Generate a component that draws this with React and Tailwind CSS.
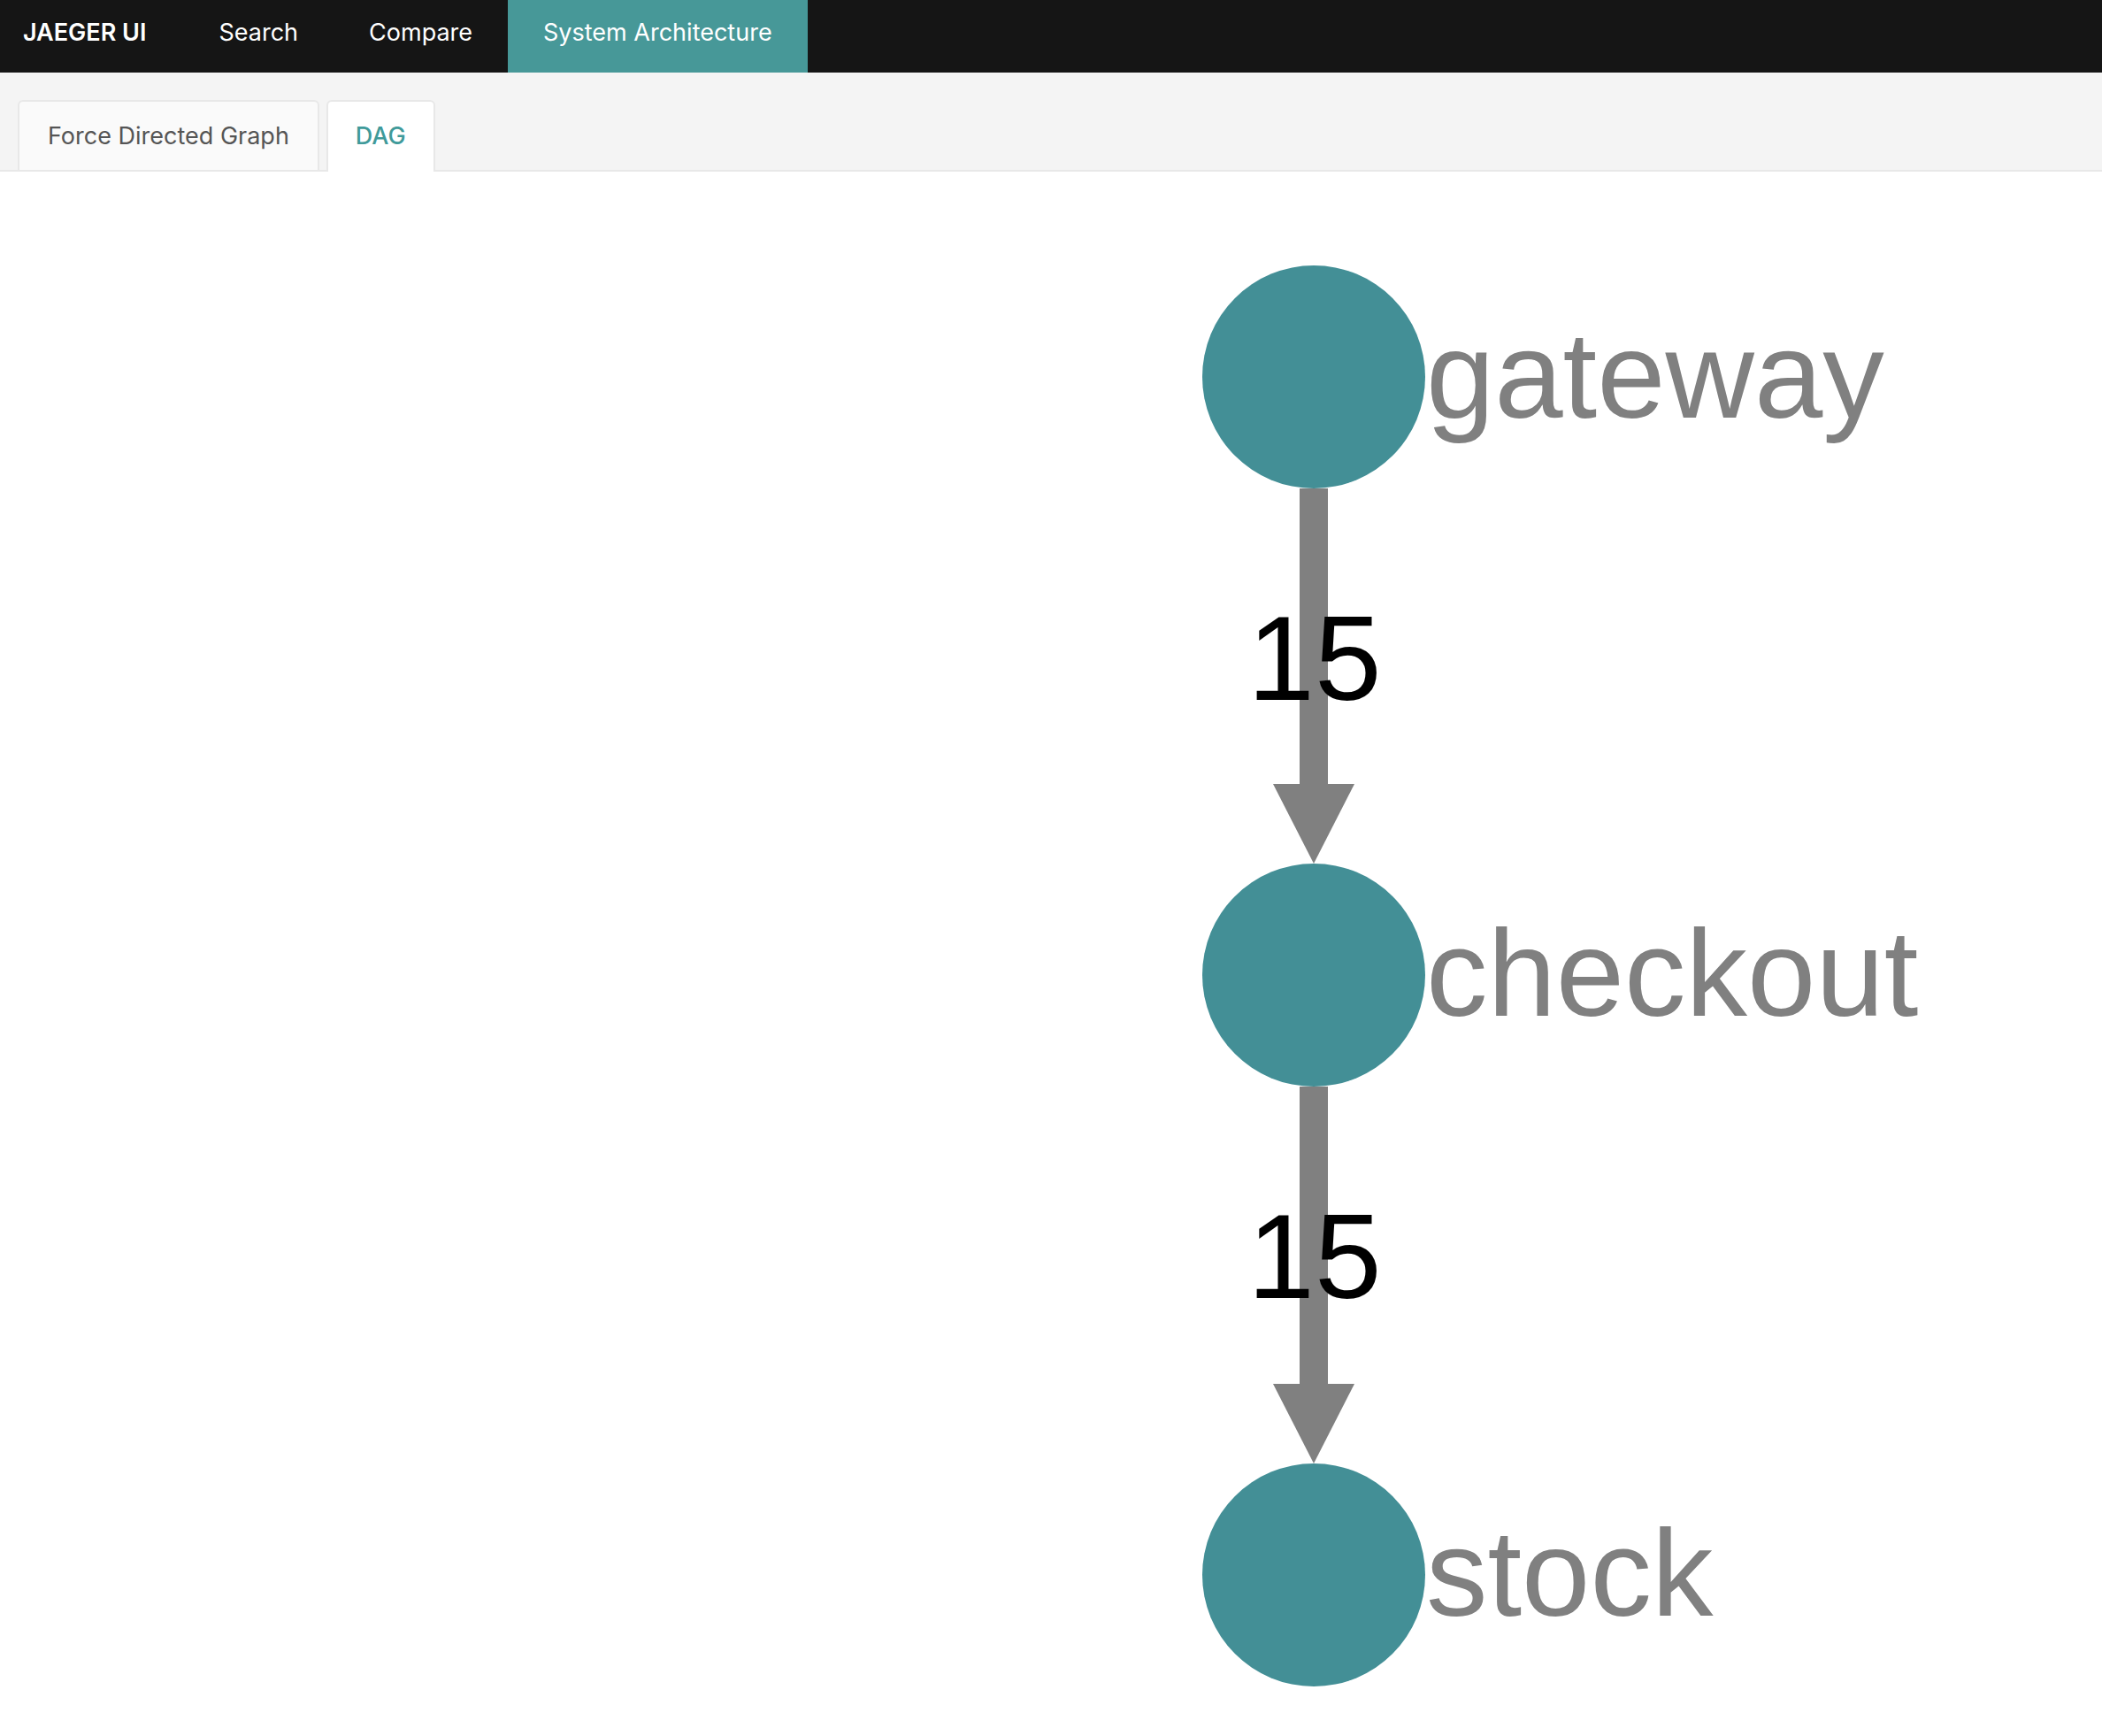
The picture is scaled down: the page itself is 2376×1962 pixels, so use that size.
import React from 'react';

const nodes = [
    { name: 'gateway', cy: 426 },
    { name: 'checkout', cy: 1102 },
    { name: 'stock', cy: 1780 },
];

const CX = 1485;
const R = 126;
const TOP = 194;
const FONT = "'Liberation Sans', Arial, sans-serif";

// DAG drawing: node circles, labelled edges with arrowheads
const Graph = () => (
    <svg width="2376" height="1768" viewBox={`0 ${TOP} 2376 1768`} className="block">
        {nodes.slice(0, -1).map((n, i) => {
            const from = n.cy + R;
            const to = nodes[i + 1].cy - R;
            return (
                <g key={n.name}>
                    <rect x={CX - 16} y={from} width="32" height={to - 90 - from + 2} fill="#808080" />
                    <polygon points={`${CX - 46},${to - 90} ${CX + 46},${to - 90} ${CX},${to}`} fill="#808080" />
                    <text x={CX + 1} y={n.cy + 365} textAnchor="middle" fontFamily={FONT} fontSize="136" fill="#000">
                        15
                    </text>
                </g>
            );
        })}
        {nodes.map(n => (
            <g key={n.name}>
                <circle cx={CX} cy={n.cy} r={R} fill="#438f96" />
                <text x={CX + R + 1} y={n.cy + 46} fontFamily={FONT} fontSize="139" fill="#808080">
                    {n.name}
                </text>
            </g>
        ))}
    </svg>
);

const App = () => {
    return (
        <div className="min-h-screen bg-white font-['Inter',sans-serif]">
            <nav className="h-[82px] bg-[#151515] flex items-stretch text-white text-[27px]">
                <div className="flex items-center pl-[26px] pr-[42px] font-semibold pb-[8px]">JAEGER UI</div>
                <div className="flex items-center px-[40px] pb-[8px]">Search</div>
                <div className="flex items-center px-[40px] pb-[8px]">Compare</div>
                <div className="flex items-center px-[40px] pb-[8px] bg-[#479898]">System Architecture</div>
            </nav>
            <div className="h-[112px] bg-[#f4f4f4] border-b-2 border-[#e8e8e8] flex items-end pl-[20px] gap-[8px]">
                <button className="h-[79px] px-[32px] bg-[#fafafa] border-2 border-b-0 border-[#e8e8e8] rounded-t-[6px] text-[27px] text-[#555] pt-[2px]">
                    Force Directed Graph
                </button>
                <button className="h-[81px] -mb-[2px] px-[31px] bg-white border-2 border-b-0 border-[#e8e8e8] rounded-t-[6px] text-[27px] text-[#3f9a9a] font-medium">
                    DAG
                </button>
            </div>
            <Graph />
        </div>
    );
};

export default App;
